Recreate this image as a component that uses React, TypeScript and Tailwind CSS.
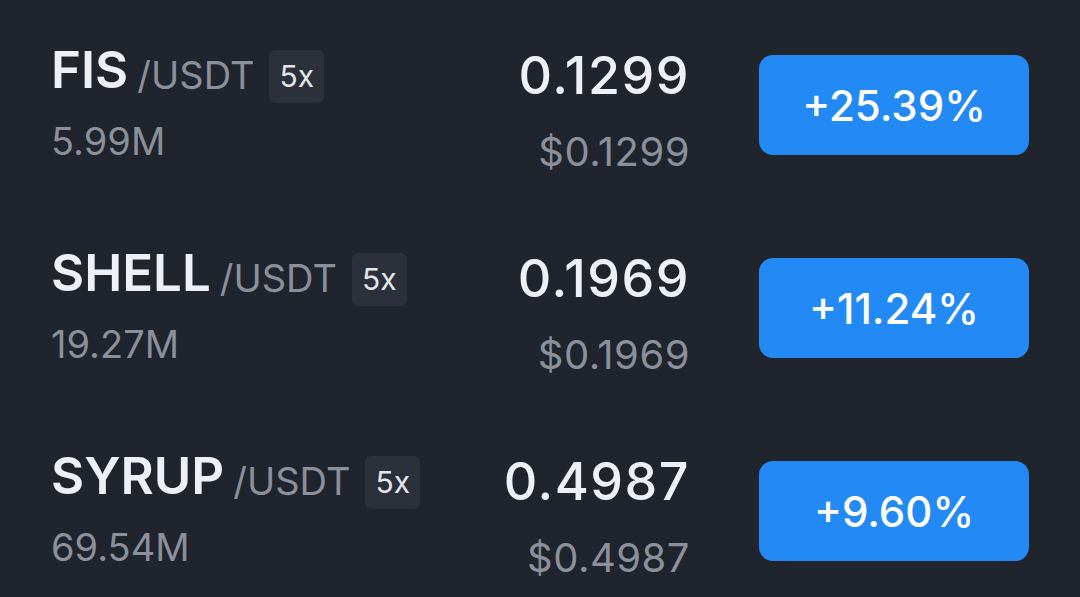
import React from 'react';

const rows = [
  { base: 'FIS', vol: '5.99M', price: '0.1299', usd: '$0.1299', change: '+25.39%' },
  { base: 'SHELL', vol: '19.27M', price: '0.1969', usd: '$0.1969', change: '+11.24%' },
  { base: 'SYRUP', vol: '69.54M', price: '0.4987', usd: '$0.4987', change: '+9.60%' },
];

const Row = ({ base, vol, price, usd, change }: (typeof rows)[number]) => (
  <div className="flex h-[203px] items-start">
    {/* pair + volume */}
    <div className="flex flex-1 flex-col pl-[51px] pt-[38px]">
      <div className="flex items-start">
        <span className="text-[51px] leading-[56px] font-semibold text-[#eef0f5]">{base}</span>
        <span className="ml-[9px] mt-[11px] text-[38px] leading-[44px] text-[#8b909a]">/USDT</span>
        <span className="ml-[15px] mt-[8px] flex h-[53px] items-center rounded-[6px] bg-[#2b303a] px-[10px] text-[30px] text-[#e3e6eb]">
          5x
        </span>
      </div>
      <div className="mt-[16px] text-[38px] leading-[44px] text-[#8b909a]">{vol}</div>
    </div>

    {/* last price */}
    <div className="flex flex-col items-end pt-[44px]">
      <div className="text-[52px] leading-[56px] font-medium tracking-[1.5px] text-[#eef0f5]">{price}</div>
      <div className="mt-[26px] text-[40px] leading-[44px] tracking-[0.5px] text-[#8b909a]">{usd}</div>
    </div>

    {/* 24h change */}
    <div className="ml-[69px] mr-[51px] mt-[51px] flex h-[100px] w-[270px] items-center justify-center rounded-[14px] bg-[#2389f5] text-[42px] font-medium text-white">
      {change}
    </div>
  </div>
);

export default function App() {
  return (
    <div
      className="h-[597px] w-[1080px] overflow-hidden bg-[#1f242d] pt-[4px]"
      style={{ fontFamily: 'Inter, "Open Sans", sans-serif' }}
    >
      {rows.map((r) => (
        <Row key={r.base} {...r} />
      ))}
    </div>
  );
}
